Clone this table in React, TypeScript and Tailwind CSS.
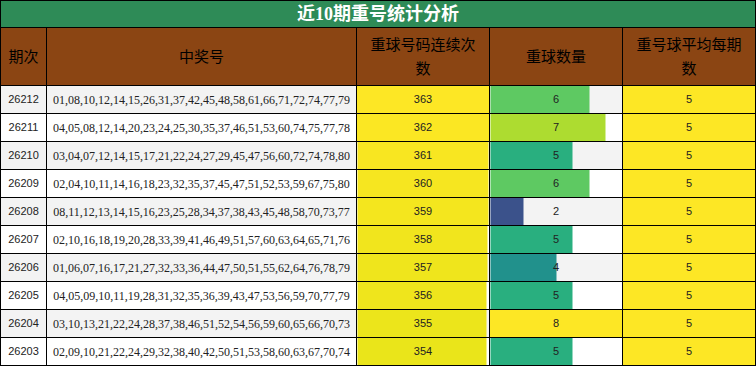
const rows = [
  { id: "26212", nums: "01,08,10,12,14,15,26,31,37,42,45,48,58,61,66,71,72,74,77,79", streak: 363, count: 6, avg: 5 },
  { id: "26211", nums: "04,05,08,12,14,20,23,24,25,30,35,37,46,51,53,60,74,75,77,78", streak: 362, count: 7, avg: 5 },
  { id: "26210", nums: "03,04,07,12,14,15,17,21,22,24,27,29,45,47,56,60,72,74,78,80", streak: 361, count: 5, avg: 5 },
  { id: "26209", nums: "02,04,10,11,14,16,18,23,32,35,37,45,47,51,52,53,59,67,75,80", streak: 360, count: 6, avg: 5 },
  { id: "26208", nums: "08,11,12,13,14,15,16,23,25,28,34,37,38,43,45,48,58,70,73,77", streak: 359, count: 2, avg: 5 },
  { id: "26207", nums: "02,10,16,18,19,20,28,33,39,41,46,49,51,57,60,63,64,65,71,76", streak: 358, count: 5, avg: 5 },
  { id: "26206", nums: "01,06,07,16,17,21,27,32,33,36,44,47,50,51,55,62,64,76,78,79", streak: 357, count: 4, avg: 5 },
  { id: "26205", nums: "04,05,09,10,11,19,28,31,32,35,36,39,43,47,53,56,59,70,77,79", streak: 356, count: 5, avg: 5 },
  { id: "26204", nums: "03,10,13,21,22,24,28,37,38,46,51,52,54,56,59,60,65,66,70,73", streak: 355, count: 8, avg: 5 },
  { id: "26203", nums: "02,09,10,21,22,24,29,32,38,40,42,50,51,53,58,60,63,67,70,74", streak: 354, count: 5, avg: 5 },
];

// viridis colours picked for the values on screen
const countColor: Record<number, string> = {
  2: "#3b528b",
  4: "#21918c",
  5: "#29af7f",
  6: "#5ec962",
  7: "#addc30",
  8: "#fde725",
};

const streakColor: Record<number, string> = {
  363: "#fde725",
  362: "#fbe723",
  361: "#f8e621",
  360: "#f6e620",
  359: "#f4e61e",
  358: "#f1e51d",
  357: "#efe51c",
  356: "#efe51c",
  355: "#ece51b",
  354: "#eae51a",
};

function bar(color: string, pct: number) {
  return { background: `linear-gradient(90deg, ${color} ${pct}%, transparent ${pct}%)` };
}

const sans = "font-['Liberation_Sans','Noto_Sans_CJK_SC',sans-serif]";

export default function App() {
  return (
    <div className="w-[756px] h-[367px] bg-white">
      <table className="w-[755px] table-fixed border-collapse text-[#222]">
        <colgroup>
          <col className="w-[46px]" />
          <col className="w-[310px]" />
          <col className="w-[133px]" />
          <col className="w-[133px]" />
          <col className="w-[133px]" />
        </colgroup>
        <thead>
          <tr className="h-[27px] bg-[#2e8b57]">
            <th
              colSpan={5}
              className="border border-black p-0 text-center text-[18px] font-bold leading-none text-white font-['Liberation_Serif','Noto_Sans_CJK_SC',serif]"
            >
              近10期重号统计分析
            </th>
          </tr>
          <tr className={`h-[58px] bg-[#8b4513] text-[15px] font-normal leading-[24px] text-black ${sans}`}>
            <th className="border border-black px-1 font-normal">期次</th>
            <th className="border border-black px-2 font-normal">中奖号</th>
            <th className="border border-black px-2 font-normal">重球号码连续次数</th>
            <th className="border border-black px-2 font-normal">重球数量</th>
            <th className="border border-black px-2 font-normal">重号球平均每期数</th>
          </tr>
        </thead>
        <tbody>
          {rows.map((r, i) => (
            <tr key={r.id} className={`h-[28px] ${i % 2 === 0 ? "bg-[#f3f3f3]" : "bg-white"}`}>
              <td className={`border border-black p-0 text-center text-[11px] ${sans}`}>{r.id}</td>
              <td className="border border-black p-0 text-center text-[12px] font-['Liberation_Serif',serif]">
                {r.nums}
              </td>
              <td
                className={`border border-black p-0 text-center text-[11px] ${sans}`}
                style={bar(streakColor[r.streak], (r.streak / 363) * 100)}
              >
                {r.streak}
              </td>
              <td
                className={`border border-black p-0 text-center text-[11px] ${sans}`}
                style={bar(countColor[r.count], (r.count / 8) * 100)}
              >
                {r.count}
              </td>
              <td className={`border border-black bg-[#fde725] p-0 text-center text-[11px] ${sans}`}>{r.avg}</td>
            </tr>
          ))}
        </tbody>
      </table>
    </div>
  );
}
